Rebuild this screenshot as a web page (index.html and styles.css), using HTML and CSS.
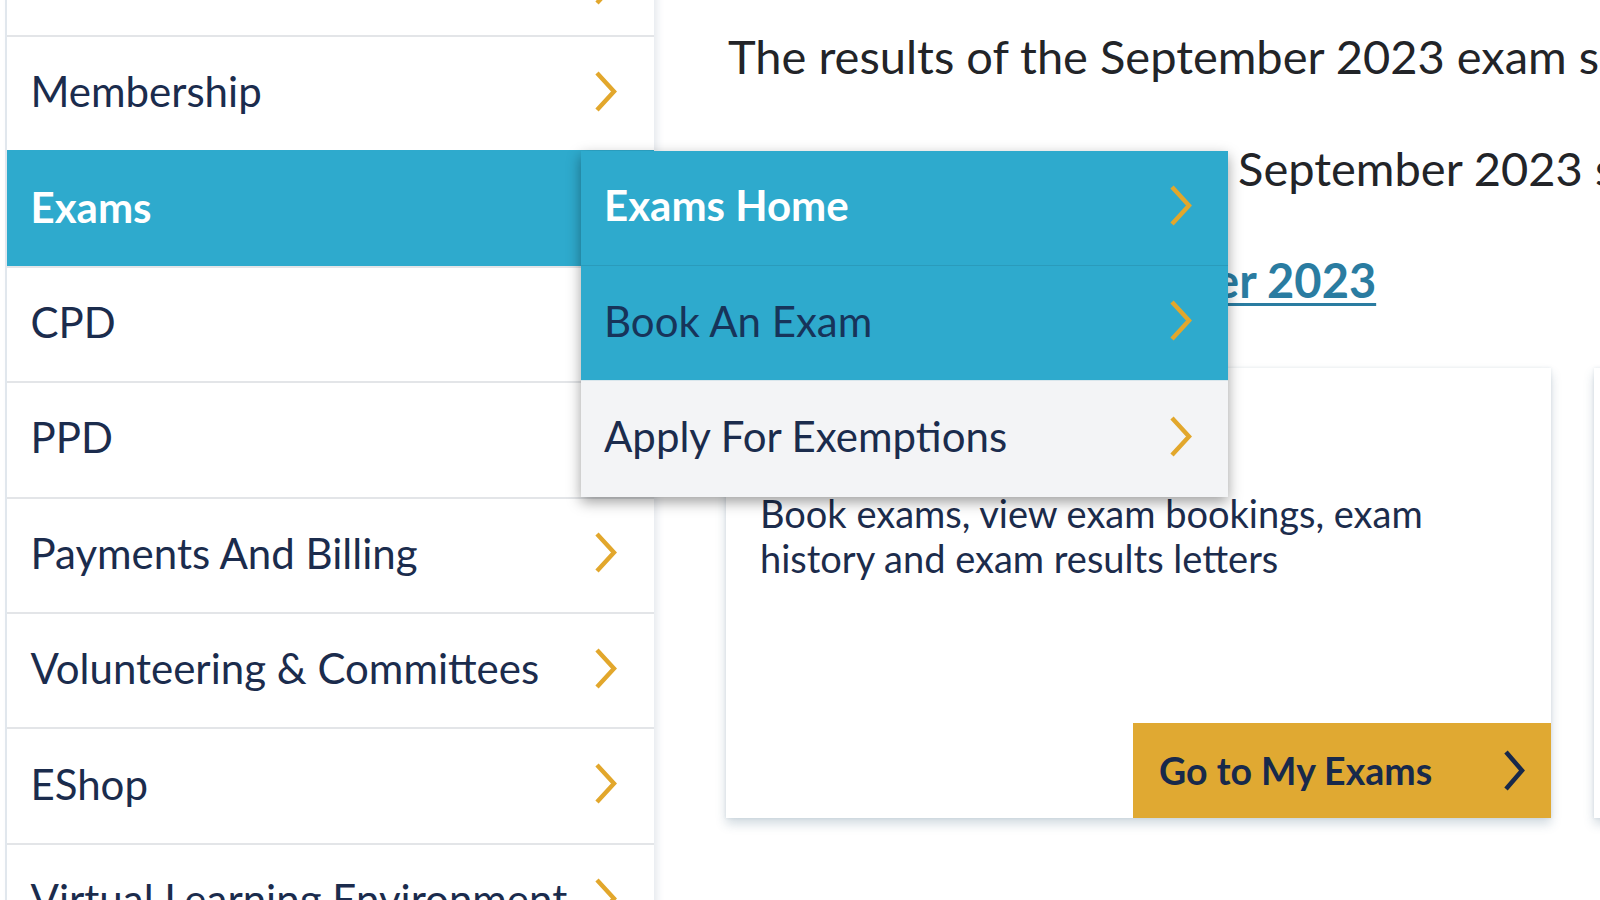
FILE: index.html
```html
<!DOCTYPE html>
<html lang="en">
<head>
<meta charset="utf-8">
<title>Exams</title>
<link rel="stylesheet" href="styles.css">
</head>
<body>
<div class="page">
  <nav class="sidebar">
    <a class="nav-item"><span class="nav-label">Dashboard</span><svg class="chev" viewBox="0 0 24 43"><path d="M3 3 L20 21.5 L3 40"/></svg></a>
    <a class="nav-item"><span class="nav-label">Membership</span><svg class="chev" viewBox="0 0 24 43"><path d="M3 3 L20 21.5 L3 40"/></svg></a>
    <a class="nav-item active"><span class="nav-label">Exams</span><svg class="chev" viewBox="0 0 24 43"><path d="M3 3 L20 21.5 L3 40"/></svg></a>
    <a class="nav-item"><span class="nav-label">CPD</span><svg class="chev" viewBox="0 0 24 43"><path d="M3 3 L20 21.5 L3 40"/></svg></a>
    <a class="nav-item"><span class="nav-label">PPD</span><svg class="chev" viewBox="0 0 24 43"><path d="M3 3 L20 21.5 L3 40"/></svg></a>
    <a class="nav-item"><span class="nav-label">Payments And Billing</span><svg class="chev" viewBox="0 0 24 43"><path d="M3 3 L20 21.5 L3 40"/></svg></a>
    <a class="nav-item"><span class="nav-label">Volunteering &amp; Committees</span><svg class="chev" viewBox="0 0 24 43"><path d="M3 3 L20 21.5 L3 40"/></svg></a>
    <a class="nav-item"><span class="nav-label">EShop</span><svg class="chev" viewBox="0 0 24 43"><path d="M3 3 L20 21.5 L3 40"/></svg></a>
    <a class="nav-item"><span class="nav-label">Virtual Learning Environment</span><svg class="chev" viewBox="0 0 24 43"><path d="M3 3 L20 21.5 L3 40"/></svg></a>
  </nav>

  <main class="content">
    <p class="lead">The results of the September 2023 exam session are now available online.</p>
    <p class="lead">Results notices from the September 2023 session can now be downloaded.</p>
    <p class="lead"><a class="lead-link">Exam Results: September 2023</a></p>

    <div class="cards">
      <div class="card">
        <h3 class="card-title">My Exams</h3>
        <p class="card-text">Book exams, view exam bookings, exam history and exam results letters</p>
        <a class="card-btn"><span>Go to My Exams</span><svg class="btn-chev" viewBox="0 0 24 43"><path d="M4 3 L20 21.5 L4 40"/></svg></a>
      </div>
      <div class="card"></div>
    </div>
  </main>
</div>

<div class="submenu">
  <a class="sub-item current"><span>Exams Home</span><svg class="chev" viewBox="0 0 24 43"><path d="M3 3 L20 21.5 L3 40"/></svg></a>
  <a class="sub-item hover"><span>Book An Exam</span><svg class="chev" viewBox="0 0 24 43"><path d="M3 3 L20 21.5 L3 40"/></svg></a>
  <a class="sub-item plain"><span>Apply For Exemptions</span><svg class="chev" viewBox="0 0 24 43"><path d="M3 3 L20 21.5 L3 40"/></svg></a>
</div>
</body>
</html>
```

FILE: styles.css
```css
* { box-sizing: border-box; }

html, body {
  margin: 0;
  padding: 0;
  width: 1600px;
  height: 900px;
  overflow: hidden;
  background: #ffffff;
  font-family: Lato, "Open Sans", "Liberation Sans", sans-serif;
}

.page {
  display: flex;
  align-items: flex-start;
  width: 1600px;
  height: 900px;
  overflow: hidden;
  position: relative;
}

/* Sidebar */
.sidebar {
  flex: none;
  width: 649px;
  margin-left: 5px;
  margin-top: -80.4px;
  border-left: 2px solid #e1e7ed;
  box-shadow: 4px 0 6px rgba(70, 100, 130, 0.12);
  background: #ffffff;
  display: flex;
  flex-direction: column;
  position: relative;
  z-index: 1;
}

.nav-item {
  height: 115.4px;
  border-top: 2px solid #e3e5e8;
  display: flex;
  align-items: center;
  justify-content: space-between;
  padding: 0 36px 5px 23.5px;
  color: #1b2c4d;
  font-size: 42px;
  text-decoration: none;
  background: #ffffff;
}

.nav-item:first-child .chev {
  transform: translateY(9px);
}

.nav-item.active {
  background: #2eaacd;
  border-top-color: #2eaacd;
  color: #ffffff;
  font-weight: 700;
}

.chev {
  width: 24px;
  height: 43px;
  flex: none;
  fill: none;
  stroke: #e2a72c;
  stroke-width: 4.4;
}

/* Main content */
.content {
  flex: none;
  padding-left: 74px;
  width: 946px;
}

.lead {
  margin: 0;
  font-size: 47px;
  line-height: 112px;
  color: #222428;
  white-space: nowrap;
}

.lead-link {
  color: #2a7ca1;
  font-weight: 700;
  text-decoration: underline;
  text-decoration-thickness: 3px;
  text-underline-offset: 5px;
}

.cards {
  margin-top: 32px;
  margin-left: -2px;
  display: flex;
  gap: 43px;
}

.card {
  flex: none;
  width: 825px;
  height: 450px;
  background: #ffffff;
  box-shadow: 0 6px 10px rgba(50, 90, 120, 0.22), 0 0 3px rgba(50, 90, 120, 0.12);
  display: flex;
  flex-direction: column;
  padding: 0 0 0 34px;
}

.card-title {
  margin: 0;
  padding-top: 34px;
  font-size: 40px;
  line-height: 88.8px;
  font-weight: 700;
  color: #1b2c4d;
}

.card-text {
  margin: 0;
  padding-right: 40px;
  font-size: 38px;
  line-height: 45px;
  color: #1c2c4c;
}

.card-btn {
  margin-top: auto;
  align-self: flex-end;
  width: 418px;
  height: 95px;
  background: #e0a932;
  color: #18294b;
  font-size: 37.5px;
  font-weight: 700;
  display: flex;
  align-items: center;
  justify-content: space-between;
  padding: 0 25px 0 26px;
  text-decoration: none;
}

.btn-chev {
  width: 24px;
  height: 43px;
  fill: none;
  stroke: #18294b;
  stroke-width: 4.5;
}

/* Flyout submenu */
.submenu {
  position: absolute;
  left: 581px;
  top: 150.5px;
  width: 647px;
  z-index: 5;
  box-shadow: 0 5px 13px rgba(0, 0, 0, 0.38);
  display: flex;
  flex-direction: column;
}

.sub-item {
  height: 115.4px;
  display: flex;
  align-items: center;
  justify-content: space-between;
  padding: 0 35px 5px 23px;
  font-size: 42px;
  text-decoration: none;
  color: #1b2c4d;
}

.sub-item.current {
  background: #2eaacd;
  color: #ffffff;
  font-weight: 700;
  border-bottom: 1px solid #2a9bbb;
}

.sub-item.hover {
  background: #2eaacd;
  color: #17345a;
  border-bottom: 1px solid #d9e6ec;
}

.sub-item.plain {
  background: #f3f4f6;
}
```
